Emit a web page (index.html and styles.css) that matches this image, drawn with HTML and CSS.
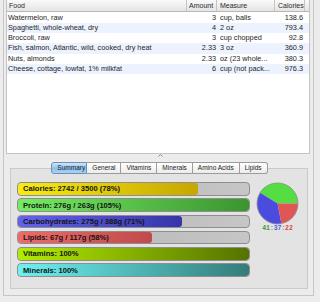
FILE: index.html
```html
<!DOCTYPE html>
<html>
<head>
    <title>Nutrition Summary</title>
    <meta name="viewport" content="width=device-width, initial-scale=1.0">
    <link rel="stylesheet" href="styles.css">
</head>
<body>
    <div class="window">
        <div class="list">
            <div class="row head">
                <span class="c-food">Food</span>
                <span class="c-amount">Amount</span>
                <span class="c-measure">Measure</span>
                <span class="c-cal">Calories</span>
            </div>
            <div class="row">
                <span class="c-food">Watermelon, raw</span>
                <span class="c-amount">3</span>
                <span class="c-measure">cup, balls</span>
                <span class="c-cal">138.6</span>
            </div>
            <div class="row alt">
                <span class="c-food">Spaghetti, whole-wheat, dry</span>
                <span class="c-amount">4</span>
                <span class="c-measure">2 oz</span>
                <span class="c-cal">793.4</span>
            </div>
            <div class="row">
                <span class="c-food">Broccoli, raw</span>
                <span class="c-amount">3</span>
                <span class="c-measure">cup chopped</span>
                <span class="c-cal">92.8</span>
            </div>
            <div class="row alt">
                <span class="c-food">Fish, salmon, Atlantic, wild, cooked, dry heat</span>
                <span class="c-amount">2.33</span>
                <span class="c-measure">3 oz</span>
                <span class="c-cal">360.9</span>
            </div>
            <div class="row">
                <span class="c-food">Nuts, almonds</span>
                <span class="c-amount">2.33</span>
                <span class="c-measure">oz (23 whole...</span>
                <span class="c-cal">380.3</span>
            </div>
            <div class="row alt">
                <span class="c-food">Cheese, cottage, lowfat, 1% milkfat</span>
                <span class="c-amount">6</span>
                <span class="c-measure">cup (not pack...</span>
                <span class="c-cal">976.3</span>
            </div>
        </div>

        <div class="splitter">
            <svg width="5" height="3" viewBox="0 0 5 3"><path d="M0.5 2.5 L2.5 0.5 L4.5 2.5" fill="none" stroke="#8a8a8a" stroke-width="1"/></svg>
        </div>

        <div class="bottom">
            <div class="tabs">
                <span class="tab selected">Summary</span>
                <span class="tab">General</span>
                <span class="tab">Vitamins</span>
                <span class="tab">Minerals</span>
                <span class="tab">Amino Acids</span>
                <span class="tab">Lipids</span>
            </div>
            <div class="tab-box">
                <div class="bars">
                    <div class="bar">
                        <div class="fill calories" style="width: 78%"></div>
                        <span class="bar-label">Calories: 2742 / 3500 (78%)</span>
                    </div>
                    <div class="bar">
                        <div class="fill protein" style="width: 100%"></div>
                        <span class="bar-label">Protein: 276g / 263g (105%)</span>
                    </div>
                    <div class="bar">
                        <div class="fill carbs" style="width: 71%"></div>
                        <span class="bar-label">Carbohydrates: 275g / 388g (71%)</span>
                    </div>
                    <div class="bar">
                        <div class="fill lipids" style="width: 58%"></div>
                        <span class="bar-label">Lipids: 67g / 117g (58%)</span>
                    </div>
                    <div class="bar">
                        <div class="fill vitamins" style="width: 100%"></div>
                        <span class="bar-label">Vitamins: 100%</span>
                    </div>
                    <div class="bar">
                        <div class="fill minerals" style="width: 100%"></div>
                        <span class="bar-label">Minerals: 100%</span>
                    </div>
                </div>
                <div class="pie-box">
                    <svg width="43" height="43" viewBox="0 0 43 43">
                        <path d="M21.5 21.5 L42 21.5 A20.5 20.5 0 0 0 4.12 10.64 Z" fill="#55dd44"/>
                        <path d="M21.5 21.5 L4.12 10.64 A20.5 20.5 0 0 0 25.41 41.62 Z" fill="#4b4be0"/>
                        <path d="M21.5 21.5 L25.41 41.62 A20.5 20.5 0 0 0 42 21.5 Z" fill="#e05656"/>
                        <circle cx="21.5" cy="21.5" r="20.5" fill="none" stroke="#8c8c8c" stroke-width="0.8"/>
                    </svg>
                    <div class="ratio"><span class="r-p">41</span>:<span class="r-c">37</span>:<span class="r-l">22</span></div>
                </div>
            </div>
        </div>
    </div>
</body>
</html>
```

FILE: styles.css
```css
body {
    margin: 0;
    background-color: #ececec;
    font-family: "Liberation Sans", Arial, sans-serif;
    color: #1e1e1e;
}

.window {
    box-sizing: border-box;
    margin-left: 3px;
    width: 311px;
    height: 296px;
    border: 1px solid #c6c6c6;
    border-top: none;
}

.list {
    box-sizing: border-box;
    margin-left: 2px;
    width: 304px;
    height: 154px;
    background: white;
    border: 1px solid #c4c4c4;
    border-top: none;
}

.row {
    display: flex;
    height: 10.3px;
    line-height: 10.3px;
    font-size: 7.3px;
    white-space: nowrap;
}

.row.alt {
    background: #edf3fe;
}

.row.head {
    height: 11px;
    line-height: 11px;
    margin-bottom: 0.5px;
    background: linear-gradient(#fafafa, #e4e4e4);
    border-bottom: 1px solid #b8b8b8;
    color: #2a2a2a;
    font-size: 7px;
}

.row span {
    box-sizing: border-box;
    overflow: hidden;
}

.c-food {
    width: 180px;
    padding-left: 1px;
}

.c-amount {
    width: 30px;
    text-align: right;
    padding-right: 1px;
}

.c-measure {
    width: 58px;
    padding-left: 3px;
}

.c-cal {
    width: 30px;
    text-align: right;
    padding-right: 2px;
}

.head span {
    border-right: 1px solid #c4c4c4;
    text-align: left;
}

.head .c-food {
    padding-left: 2px;
}

.head .c-amount {
    padding-left: 2px;
}

.head .c-cal {
    padding-left: 3px;
}

.splitter {
    height: 7px;
    display: flex;
    justify-content: center;
    align-items: flex-start;
}

.splitter svg {
    margin-left: 4px;
}

.bottom {
    padding: 1px 5px 0 6px;
}

.tabs {
    position: relative;
    z-index: 1;
    display: flex;
    justify-content: center;
    margin-bottom: -6px;
    padding-left: 1px;
}

.tab {
    box-sizing: border-box;
    height: 12px;
    line-height: 10px;
    padding: 0 5px;
    font-size: 6.5px;
    text-align: center;
    color: #222;
    background: linear-gradient(#ffffff, #ececec);
    border: 1px solid #9c9c9c;
    border-left: none;
}

.tab:first-child {
    border-left: 1px solid #7c97b8;
    border-radius: 3px 0 0 3px;
}

.tab:last-child {
    border-radius: 0 3px 3px 0;
}

.tab.selected {
    background: linear-gradient(#cfe6fb, #8ec0ef 55%, #a9d3f7);
    border-color: #6e8fb8;
    width: 36px;
}

.tab-box {
    box-sizing: border-box;
    height: 121px;
    background: #e3e3e3;
    border: 1px solid #cacaca;
    display: flex;
    gap: 6px;
    padding: 13px 0 0 6px;
}

.bars {
    width: 233px;
    display: flex;
    flex-direction: column;
    gap: 2.8px;
}

.bar {
    box-sizing: border-box;
    position: relative;
    height: 13.5px;
    border: 1px solid #8e8e8e;
    border-radius: 4px;
    background: linear-gradient(to right, #b2b2b2, #c6c6c6);
    overflow: hidden;
    display: flex;
    align-items: center;
}

.fill {
    position: absolute;
    left: 0;
    top: 0;
    bottom: 0;
    border-radius: 3px;
}

.fill.calories {
    background: linear-gradient(to right, #f7ec12, #c7a600);
}

.fill.protein {
    background: linear-gradient(to right, #74ec60, #3a9530);
}

.fill.carbs {
    background: linear-gradient(to right, #6262ee, #3636a8);
}

.fill.lipids {
    background: linear-gradient(to right, #ef6a6a, #c04a4a);
}

.fill.vitamins {
    background: linear-gradient(to right, #b2ec00, #557200);
}

.fill.minerals {
    background: linear-gradient(to right, #6cf2f2, #347c7a);
}

.bar-label {
    position: relative;
    padding-left: 5px;
    font-size: 7.6px;
    font-weight: bold;
    color: #151515;
}

.pie-box {
    display: flex;
    flex-direction: column;
    align-items: center;
    width: 43px;
}

.ratio {
    font-family: "Liberation Mono", "Courier New", monospace;
    font-size: 6.5px;
    font-weight: bold;
    color: #8a8aa0;
    letter-spacing: -0.1px;
}

.r-p {
    color: #3c9c3c;
}

.r-c {
    color: #5858dc;
}

.r-l {
    color: #dc4848;
}
```
